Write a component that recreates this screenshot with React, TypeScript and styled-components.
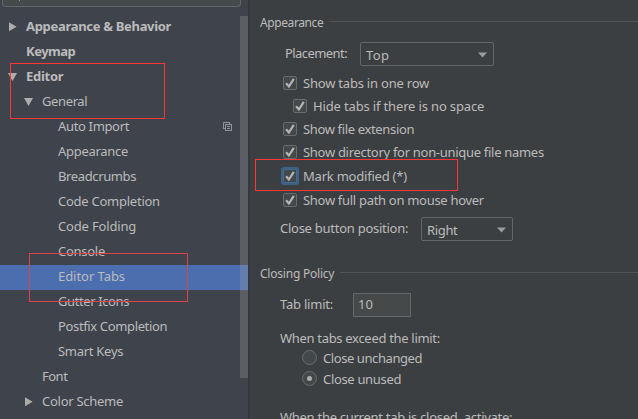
import React from 'react';
import styled, { createGlobalStyle } from 'styled-components';

const GlobalStyle = createGlobalStyle`
  html, body, #root { margin: 0; height: 100%; }
  body {
    overflow: hidden;
    background: #3c3f41;
    color: #bbbbbb;
    font: 13px/18px "Noto Sans", "Open Sans", sans-serif;
  }
  * { box-sizing: border-box; }
`;

const Window = styled.div`
  position: relative;
  display: flex;
  width: 638px;
  height: 419px;
  overflow: hidden;
`;

const Label = styled.span<{ $track?: number }>`
  white-space: pre;
  letter-spacing: ${(p) => p.$track ?? 0}px;
`;

/* ---------- sidebar ---------- */

const Sidebar = styled.aside`
  display: flex;
  flex-direction: column;
  flex: none;
  width: 250px;
  background: #3f434c;
  border-right: 2px solid #34373c;
`;

const SearchField = styled.div`
  flex: none;
  width: 239px;
  height: 7px;
  margin: 0 0 8px 2px;
  padding-left: 16px;
  background: #454a4a;
  border: 1px solid #646668;
  border-top: 0;
  border-radius: 0 0 4px 4px;
`;

const SearchHandle = styled.div`
  width: 1px;
  height: 1px;
  background: #8b8e90;
`;

const Tree = styled.div`
  position: relative;
  flex: 1;
`;

const TreeRow = styled.div<{ $level: number; $bold?: boolean; $selected?: boolean }>`
  display: flex;
  align-items: center;
  height: 25px;
  padding: 0 21px 2px ${(p) => 7 + p.$level * 16}px;
  font-weight: ${(p) => (p.$bold ? 700 : 400)};
  background: ${(p) => (p.$selected ? '#4b6eaf' : 'transparent')};
`;

const TreeLabel = styled(Label)`
  padding-bottom: 2px;
`;

const ArrowSlot = styled.span`
  display: flex;
  align-items: center;
  flex: none;
  width: 19px;
  height: 13px;
`;

const CopySlot = styled.span`
  display: flex;
  margin-left: auto;
  margin-right: -5px;
`;

const ScrollThumb = styled.div`
  position: absolute;
  top: 1px;
  right: 0;
  width: 8px;
  height: 362px;
  background: rgba(166, 166, 170, 0.28);
`;

/* ---------- settings pane ---------- */

const Pane = styled.main`
  display: flex;
  flex-direction: column;
  flex: 1;
  min-width: 0;
  background: #3c3f41;
`;

const SectionHeader = styled.div<{ $top: number }>`
  display: flex;
  flex: none;
  align-items: center;
  gap: 6px;
  height: 18px;
  margin-top: ${(p) => p.$top}px;
  padding-left: 10px;
  font-size: 12px;
`;

const Rule = styled.div`
  flex: 1;
  height: 1px;
  margin-bottom: 3px;
  background: #515456;
`;

const FieldRow = styled.div<{ $top: number; $indent: number }>`
  display: flex;
  flex: none;
  align-items: center;
  height: 24px;
  margin-top: ${(p) => p.$top}px;
  padding-left: ${(p) => p.$indent}px;
`;

const FieldLabel = styled(Label)<{ $width: number }>`
  flex: none;
  width: ${(p) => p.$width}px;
  padding-bottom: 2px;
`;

const SelectBox = styled.div<{ $width: number }>`
  display: flex;
  align-items: center;
  justify-content: space-between;
  width: ${(p) => p.$width}px;
  height: 24px;
  padding: 1px 5px 0 5px;
  border: 1px solid #646668;
  border-radius: 2px;
`;

const NumberBox = styled.div`
  display: flex;
  align-items: center;
  width: 58px;
  height: 24px;
  padding: 0 4px 2px;
  background: #45494a;
  border: 1px solid #646668;
`;

const CheckList = styled.div`
  flex: none;
  padding-top: 5px;
`;

const OptionRow = styled.div<{ $indent: number; $height: number }>`
  display: flex;
  flex: none;
  align-items: center;
  gap: 6px;
  height: ${(p) => p.$height}px;
  padding-left: ${(p) => p.$indent}px;
`;

const CheckSquare = styled.span<{ $focused?: boolean }>`
  display: flex;
  flex: none;
  width: 14px;
  height: 14px;
  background: #43494a;
  border: 1px solid ${(p) => (p.$focused ? '#43698e' : '#6b6b6b')};
  border-radius: ${(p) => (p.$focused ? 1 : 2)}px;
  box-shadow: ${(p) => (p.$focused ? '0 0 0 2px #3d6185' : 'none')};
`;

const RadioCircle = styled.span`
  display: flex;
  flex: none;
  align-items: center;
  justify-content: center;
  width: 15px;
  height: 15px;
  background: #43494a;
  border: 1px solid #6b6b6b;
  border-radius: 50%;
`;

const RadioDot = styled.span`
  width: 5px;
  height: 5px;
  border-radius: 50%;
  background: #adadad;
`;

const Caption = styled.div<{ $top: number }>`
  display: flex;
  flex: none;
  height: 18px;
  margin-top: ${(p) => p.$top}px;
  padding-left: 30px;
`;

const Marker = styled.div<{ $x: number; $y: number; $w: number; $h: number; $soft?: boolean }>`
  position: absolute;
  left: ${(p) => p.$x}px;
  top: ${(p) => p.$y}px;
  width: ${(p) => p.$w}px;
  height: ${(p) => p.$h}px;
  border: 1px solid ${(p) => (p.$soft ? '#dc4348' : '#fb3634')};
  pointer-events: none;
`;

/* ---------- drawings ---------- */

const TreeArrow = ({ open }: { open: boolean }) =>
  open ? (
    <svg width="11" height="11" viewBox="0 0 11 11">
      <path d="M1 2H10L5.5 10Z" fill="#adadad" />
    </svg>
  ) : (
    <svg width="11" height="11" viewBox="0 0 11 11">
      <path d="M2 1.2V10.2L9.6 5.7Z" fill="#adadad" />
    </svg>
  );

const CopyIcon = () => (
  <svg width="9" height="9" viewBox="0 0 9 9" fill="none" stroke="#8b949d">
    <path d="M0.5 7V0.5H7" />
    <path d="M0 6.5H2M6.5 0V2" />
    <rect x="2.5" y="2.5" width="6" height="6" />
    <path d="M4 4.5H7M4 6.5H7" />
  </svg>
);

const CheckMark = () => (
  <svg width="12" height="12" viewBox="0 0 12 12">
    <path d="M2.1 6.2L4.9 9.5L9.8 1.8" fill="none" stroke="#b5b5b5" strokeWidth="2.2" />
  </svg>
);

const DropArrow = () => (
  <svg width="10" height="6" viewBox="0 0 10 6">
    <path d="M0 0.5H9L4.5 5.5Z" fill="#9a9da0" />
  </svg>
);

/* ---------- data ---------- */

interface TreeItem {
  text: string;
  level: number;
  track: number;
  bold?: boolean;
  arrow?: 'open' | 'closed';
  selected?: boolean;
  copy?: boolean;
}

const treeItems: TreeItem[] = [
  { text: 'Appearance & Behavior', level: 0, track: -0.31, bold: true, arrow: 'closed' },
  { text: 'Keymap', level: 0, track: -0.5, bold: true },
  { text: 'Editor', level: 0, track: -0.26, bold: true, arrow: 'open' },
  { text: 'General', level: 1, track: -0.38, arrow: 'open' },
  { text: 'Auto Import', level: 2, track: -0.34, copy: true },
  { text: 'Appearance', level: 2, track: -0.29 },
  { text: 'Breadcrumbs', level: 2, track: -0.38 },
  { text: 'Code Completion', level: 2, track: -0.25 },
  { text: 'Code Folding', level: 2, track: -0.17 },
  { text: 'Console', level: 2, track: -0.27 },
  { text: 'Editor Tabs', level: 2, track: -0.05, selected: true },
  { text: 'Gutter Icons', level: 2, track: -0.39 },
  { text: 'Postfix Completion', level: 2, track: -0.36 },
  { text: 'Smart Keys', level: 2, track: -0.28 },
  { text: 'Font', level: 1, track: -0.5 },
  { text: 'Color Scheme', level: 1, track: -0.27, arrow: 'closed' },
];

const checks = [
  { text: 'Show tabs in one row', track: -0.21, indent: 33, height: 23 },
  { text: 'Hide tabs if there is no space', track: -0.15, indent: 43, height: 23 },
  { text: 'Show file extension', track: -0.35, indent: 33, height: 23 },
  { text: 'Show directory for non-unique file names', track: -0.295, indent: 33, height: 23 },
  { text: 'Mark modified (*)', track: -0.22, indent: 33, height: 25, focused: true },
  { text: 'Show full path on mouse hover', track: -0.3, indent: 33, height: 23 },
];

export default function App() {
  return (
    <Window>
      <GlobalStyle />
      <Sidebar>
        <SearchField>
          <SearchHandle />
        </SearchField>
        <Tree>
          {treeItems.map((item) => (
            <TreeRow key={item.text} $level={item.level} $bold={item.bold} $selected={item.selected}>
              <ArrowSlot>{item.arrow && <TreeArrow open={item.arrow === 'open'} />}</ArrowSlot>
              <TreeLabel $track={item.track}>{item.text}</TreeLabel>
              {item.copy && (
                <CopySlot>
                  <CopyIcon />
                </CopySlot>
              )}
            </TreeRow>
          ))}
          <ScrollThumb />
        </Tree>
      </Sidebar>

      <Pane>
        <SectionHeader $top={14}>
          <Label $track={-0.4}>Appearance</Label>
          <Rule />
        </SectionHeader>
        <FieldRow $top={10} $indent={35}>
          <FieldLabel $width={75} $track={-0.57}>Placement:</FieldLabel>
          <SelectBox $width={134}>
            <Label $track={0.4}>Top</Label>
            <DropArrow />
          </SelectBox>
        </FieldRow>
        <CheckList>
          {checks.map((c) => (
            <OptionRow key={c.text} $indent={c.indent} $height={c.height}>
              <CheckSquare $focused={c.focused}>
                <CheckMark />
              </CheckSquare>
              <Label $track={c.track}>{c.text}</Label>
            </OptionRow>
          ))}
        </CheckList>
        <FieldRow $top={6} $indent={30}>
          <FieldLabel $width={141} $track={-0.26}>Close button position:</FieldLabel>
          <SelectBox $width={92}>
            <Label $track={-0.35}>Right</Label>
            <DropArrow />
          </SelectBox>
        </FieldRow>

        <SectionHeader $top={24}>
          <Label $track={-0.22}>Closing Policy</Label>
          <Rule />
        </SectionHeader>
        <FieldRow $top={10} $indent={30}>
          <FieldLabel $width={73} $track={-0.22}>Tab limit:</FieldLabel>
          <NumberBox>
            <Label>10</Label>
          </NumberBox>
        </FieldRow>
        <Caption $top={12}>
          <Label $track={-0.31}>When tabs exceed the limit:</Label>
        </Caption>
        <OptionRow $indent={52} $height={21}>
          <RadioCircle />
          <Label $track={-0.42}>Close unchanged</Label>
        </OptionRow>
        <OptionRow $indent={52} $height={21}>
          <RadioCircle>
            <RadioDot />
          </RadioCircle>
          <Label $track={-0.33}>Close unused</Label>
        </OptionRow>
        <Caption $top={19}>
          <Label $track={-0.28}>When the current tab is closed, activate:</Label>
        </Caption>
      </Pane>

      <Marker $x={10} $y={63} $w={155} $h={56} />
      <Marker $x={29} $y={253} $w={159} $h={49} $soft />
      <Marker $x={255} $y={159} $w={203} $h={32} />
    </Window>
  );
}
